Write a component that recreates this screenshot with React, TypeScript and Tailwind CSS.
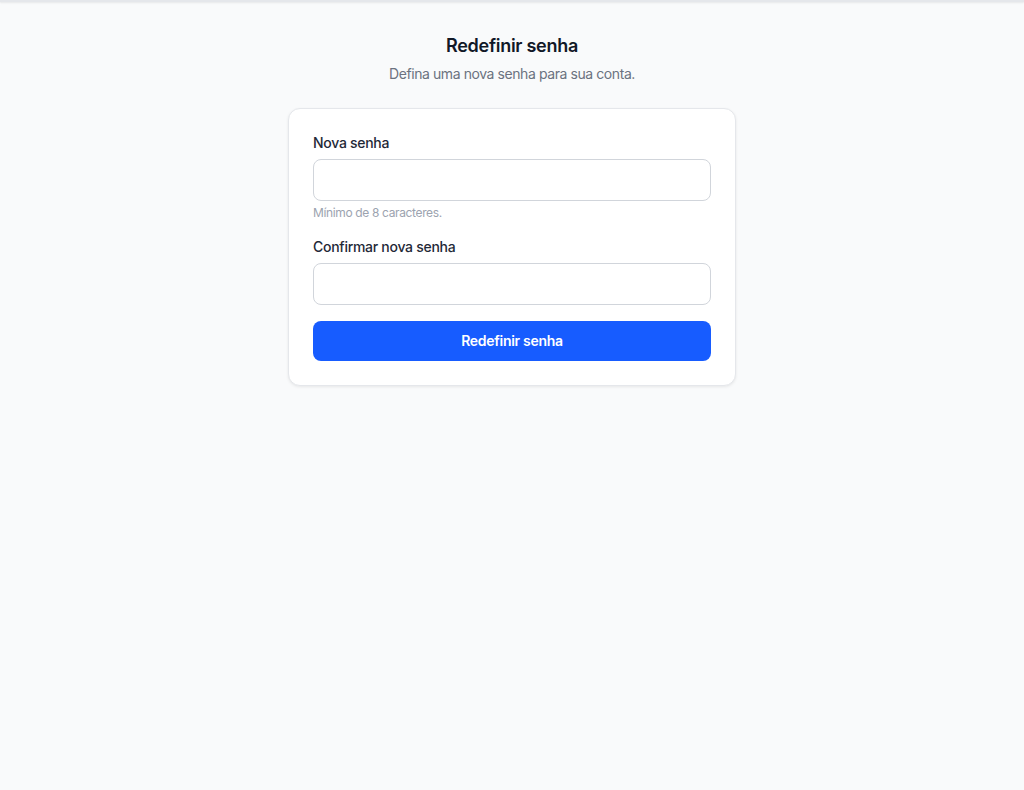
import React from "react";

export default function App() {
  return (
    <div className="min-h-[790px] bg-[#f9fafb] font-['Inter',sans-serif]">
      <div className="h-[2px] bg-[#e5e7eb] shadow-[0_1px_2px_rgba(0,0,0,0.08)]" />
      <div className="flex flex-col items-center pt-[30px]">
        <h1 className="text-[18px] leading-7 font-semibold text-[#111827] tracking-[-0.015em]">Redefinir senha</h1>
        <p className="mt-1 text-sm leading-5 text-[#6b7280] tracking-[-0.03em]">Defina uma nova senha para sua conta.</p>
        <div className="mt-6 w-[448px] rounded-xl border border-[#e5e7eb] bg-white p-6 shadow-[0_1px_3px_rgba(0,0,0,0.08)]">
          <label className="block text-sm leading-5 font-medium text-[#1f2937] tracking-[-0.02em]">Nova senha</label>
          <input type="password" className="mt-1.5 block h-[42px] w-full rounded-lg border border-[#d1d5db] bg-white px-3 text-sm outline-none" />
          <p className="mt-1 text-xs leading-4 text-[#9ca3af] tracking-[-0.03em]">Mínimo de 8 caracteres.</p>
          <label className="mt-4 block text-sm leading-5 font-medium text-[#1f2937] tracking-[-0.02em]">Confirmar nova senha</label>
          <input type="password" className="mt-1.5 block h-[42px] w-full rounded-lg border border-[#d1d5db] bg-white px-3 text-sm outline-none" />
          <button className="mt-4 flex h-10 w-full items-center justify-center rounded-lg bg-[#175cff] text-sm font-semibold text-white tracking-[-0.02em]">Redefinir senha</button>
        </div>
      </div>
    </div>
  );
}
